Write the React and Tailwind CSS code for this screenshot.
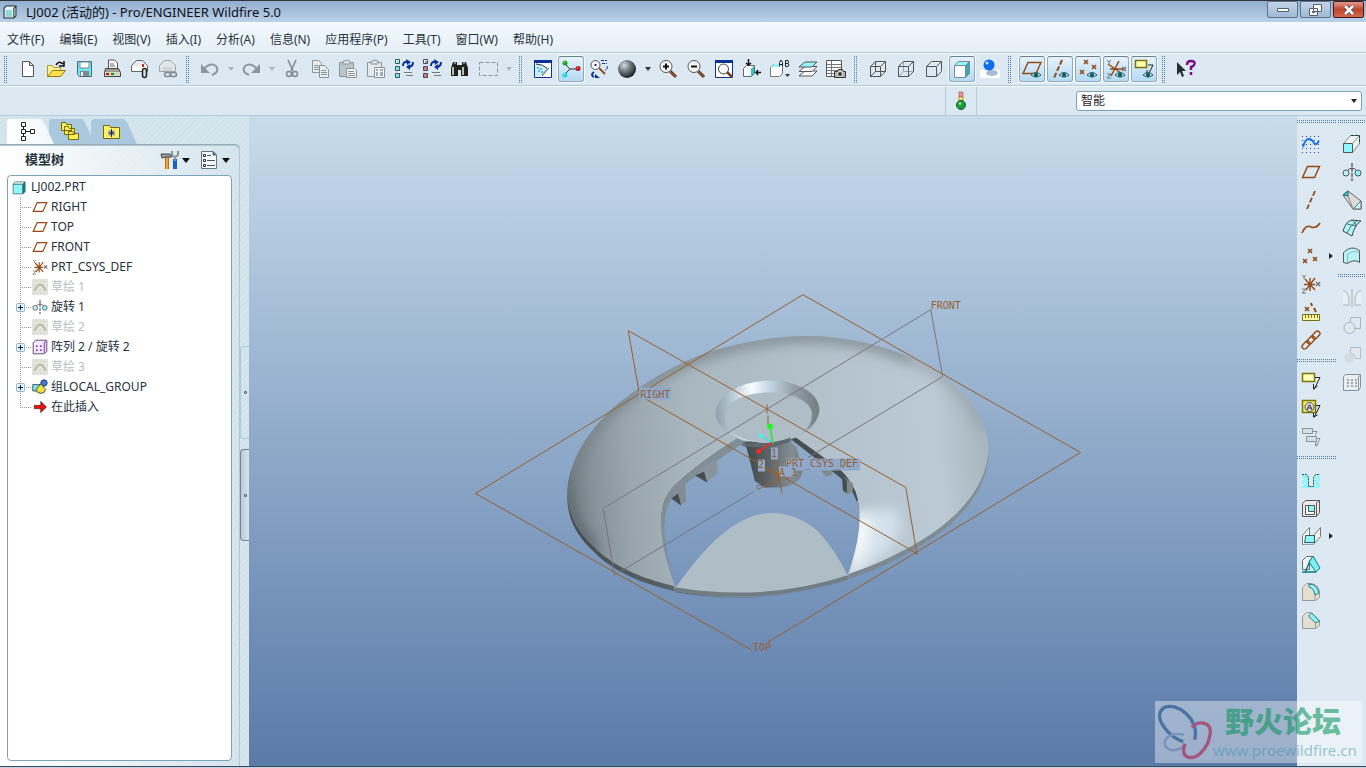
import { clsx } from 'clsx';

const BROWN = '#944a14';
const CYAN = '#8ff6fb';

const MENUS = ['文件(F)', '编辑(E)', '视图(V)', '插入(I)', '分析(A)', '信息(N)', '应用程序(P)', '工具(T)', '窗口(W)', '帮助(H)'];

/* Small shared pieces of the icon drawings */
function Eye() {
  return (
    <g>
      <path d="M9 16q5-5 10 0q-5 4-10 0z" fill="#e8f0f0" stroke="#445" />
      <circle cx="14" cy="16" r="2.4" fill="#00857f" />
      <circle cx="14" cy="16" r="1" fill="#023" />
    </g>
  );
}

function Cross({ x, y, c = BROWN }) {
  return <path d={`M${x - 2} ${y - 2}l4 4m0-4l-4 4`} stroke={c} strokeWidth="1.6" />;
}

function Lens({ children }) {
  return (
    <g>
      <path d="M12 12l6 6" stroke="#5b2c14" strokeWidth="3" />
      <path d="M12 12l6 6" stroke="#b5764b" />
      <circle cx="8" cy="7.500" r="6" fill="#f5f9fb" stroke="#555" />
      {children}
    </g>
  );
}

function Regen({ c }) {
  return (
    <g fill="none">
      <path d="M1.500 .5h4v4h-4zM1.500 7.500h4v4h-4zM1.500 14.500h4v4h-4z" fill={c} stroke="#356" />
      <path d="M2.500 4v-2.500h2.500" stroke="#fff" />
      <path d="M9 7q0-5 5-4M19 3q0 5-5 5" stroke="#0b2f9a" strokeWidth="2" />
      <path d="M12 0l5 3-4 3zM16 5l-4 3 4 3z" fill="#0b2f9a" />
      <path d="M10 13.500h8M12 16.500h7" stroke="#777" />
    </g>
  );
}

function Chain({ c = BROWN }) {
  return (
    <g fill="none" stroke={c} strokeWidth="1.400">
      <rect x="10.500" y="2.500" width="9" height="5" rx="2.500" transform="rotate(-45 15 5)" />
      <rect x="5.500" y="7.500" width="9" height="5" rx="2.500" transform="rotate(-45 10 10)" />
      <rect x=".5" y="12.500" width="9" height="5" rx="2.500" transform="rotate(-45 5 15)" />
    </g>
  );
}

const ICONS = {
  new: <path d="M4.500 2.500h7l4 4v11h-11zM11.500 2.500v4h4" fill="#fff" stroke="#555" />,
  open: (
    <g>
      <path d="M1.500 17.500v-11h5l1 2h7v9z" fill="#ffef96" stroke="#b39b23" />
      <path d="M1.500 17.500l5-6h13l-5 6z" fill="#ffe24a" stroke="#8c7a1c" />
      <path d="M10 6q3-5 7-1M18 2v5h-5" fill="none" stroke="#111" strokeWidth="1.500" />
    </g>
  ),
  save: (
    <g>
      <path d="M3.500 2.500h14v15h-12l-2-2z" fill="#70e9f0" stroke="#4a6a77" />
      <path d="M6 3h9v6h-9z" fill="#fff" stroke="#789" />
      <path d="M6 12h9v5h-9z" fill="#7b8b91" />
      <path d="M7 13h2v4h-2z" fill="#eee" />
    </g>
  ),
  print: (
    <g>
      <path d="M6.500 10v-9h6l3 3v6z" fill="#fff" stroke="#555" />
      <path d="M8 5h4M8 7h5" stroke="#666" />
      <path d="M3.500 9.500h13l2 4v4h-16v-4z" fill="#9c9c90" stroke="#444" />
      <path d="M3 13h15v4h-15z" fill="#d6d6c6" />
      <path d="M4 14h3v2h-3z" fill="#c11" />
      <path d="M9 14h3v2h-3z" fill="#090" />
    </g>
  ),
  mail: (
    <g>
      <path d="M1.500 12.500v-6l5-5h6l5 5v6z" fill="#e9ecee" stroke="#666" />
      <path d="M3 7h12v5h-12z" fill="#fff" />
      <path d="M12 5h2v3h-2z" fill="#d22" />
      <rect x="12.500" y="9.500" width="4" height="9" rx="2" fill="#ddd" stroke="#222" strokeWidth="1.500" />
    </g>
  ),
  mailLink: (
    <g>
      <path d="M1.500 12.500v-6l5-5h6l5 5v6z" fill="#e0e6ea" stroke="#9aa5ab" />
      <path d="M5 8h9v4h-9z" fill="#cfd7dc" />
      <rect x="6.500" y="13.500" width="6" height="4" rx="2" fill="none" stroke="#7e878c" strokeWidth="1.500" />
      <rect x="12.500" y="13.500" width="6" height="4" rx="2" fill="none" stroke="#7e878c" strokeWidth="1.500" />
    </g>
  ),
  undo: (
    <g>
      <path d="M4 10q6-7 12-3q4 6-4 9" fill="none" stroke="#8c979d" strokeWidth="2" />
      <path d="M1 5v9h9z" fill="#8c979d" />
    </g>
  ),
  redo: (
    <g>
      <path d="M16 10q-6-7-12-3q-4 6 4 9" fill="none" stroke="#8c979d" strokeWidth="2" />
      <path d="M19 5v9h-9z" fill="#8c979d" />
    </g>
  ),
  cut: (
    <g fill="none" stroke="#7f8a90" strokeWidth="1.500">
      <path d="M6 1l5 11M14 1l-5 11" />
      <circle cx="7" cy="15" r="2.500" />
      <circle cx="13" cy="15" r="2.500" />
    </g>
  ),
  copy: (
    <g fill="#e8eef2" stroke="#8b959b">
      <path d="M2.500 1.500h6l3 3v9h-9z" />
      <path d="M4 6.500h5M4 8.500h5M4 10.500h5" />
      <path d="M9.500 6.500h5l4 4v8h-9z" />
      <path d="M11 11.500h5M11 13.500h6M11 15.500h6" />
    </g>
  ),
  paste: (
    <g stroke="#8b959b">
      <path d="M1.500 3.500h14v14h-14z" fill="#bcc5ca" />
      <path d="M5 5v-3h2l2-1 2 1h1v3z" fill="#dfe6ea" />
      <path d="M8.500 9.500h8l2 2v7h-10z" fill="#f0f4f6" />
      <path d="M10 12.500h6M10 14.500h7M10 16.500h7" />
    </g>
  ),
  pasteSpecial: (
    <g stroke="#8b959b">
      <path d="M1.500 3.500h14v14h-14z" fill="#e4eaee" />
      <path d="M5 5v-3h2l2-1 2 1h1v3z" fill="#dfe6ea" />
      <path d="M8.500 8.500h10v10h-10z" fill="#f0f4f6" />
      <path d="M10 11h2M14 11h3M10 14h2M14 14h3M10 16h2M14 16h3" strokeWidth="1.500" />
    </g>
  ),
  regen: <Regen c="#7fe8e4" />,
  regenRed: <Regen c="#f07070" />,
  find: (
    <g>
      <path d="M3 3h4v3h5v-3h4l2 6v8h-7v-6h-3v6h-7v-8z" fill="#222" />
      <path d="M3 8v8M13 8v8" stroke="#bdbda8" strokeWidth="2" />
      <path d="M4 4h2M13 4h2" stroke="#eee" />
    </g>
  ),
  select: <path d="M1.500 3.500h18v13h-18z" fill="none" stroke="#8b959b" strokeDasharray="4 2" />,
  repaint: (
    <g>
      <path d="M1.500 1.500h17v17h-17z" fill="#fff" stroke="#0a3296" />
      <path d="M1 1h18v3h-18z" fill="#0a3296" />
      <path d="M2 6q7-1 12 3l-6 8h-6z" fill="#c5f1fa" />
      <path d="M4 9h2M7 10h2M5 12h2M8 13h2" stroke="#27b" />
      <path d="M16 9l-7 8M3 5q7 0 12 5" fill="none" stroke="#333" />
      <path d="M15 9l-6 7" stroke="#9ab0bd" strokeWidth="1.500" />
    </g>
  ),
  spin: (
    <g>
      <path d="M3 4l6 6l-6 6M9 10h7" fill="none" stroke="#333" />
      <circle cx="4" cy="4" r="2.500" fill="#19a319" />
      <circle cx="17" cy="9.500" r="2.500" fill="#c51111" />
      <circle cx="4" cy="16" r="2.500" fill="#23d5e2" />
      <path d="M3 3h1M16 9h1M3 15h1" stroke="#fff" />
    </g>
  ),
  orient: (
    <g>
      <path d="M10 9l6 6" stroke="#8a4d2a" strokeWidth="2" />
      <circle cx="6.500" cy="6" r="4.500" fill="#f3f7fa" stroke="#555" />
      <circle cx="6.500" cy="6" r="1" />
      <path d="M12 1.500h6M13 4.500h5M18 7q1 4-2 4" fill="none" stroke="#0a2f9a" strokeDasharray="3 1" />
      <path d="M5 13q-4 3 0 5" fill="none" stroke="#0a2f9a" strokeWidth="2" />
      <path d="M6 19v-4l5 4z" fill="#0a2f9a" />
    </g>
  ),
  sphere: <circle cx="10" cy="10" r="9" fill="url(#sphereFill)" />,
  zoomIn: <Lens><path d="M5 7.500h6M8 4.500v6" stroke="#111" strokeWidth="2" /></Lens>,
  zoomOut: <Lens><path d="M5 7.500h6" stroke="#111" strokeWidth="2" /></Lens>,
  refit: (
    <g>
      <path d="M1.500 1.500h17v17h-17z" fill="#fff" stroke="#0a3296" />
      <path d="M1 1h18v3h-18z" fill="#0a3296" />
      <path d="M13 13l5 5" stroke="#7a3c1d" strokeWidth="2.500" />
      <circle cx="9.500" cy="10" r="5" fill="#f4f8fa" stroke="#444" />
    </g>
  ),
  reorient: (
    <g>
      <path d="M1.500 9.500l3-3h8v8l-3 3h-8z" fill="#fff" stroke="#666" />
      <path d="M9 10l3-3v8l-3 3z" fill="#27c7c7" />
      <path d="M6.500 0v6M4 4l2.500 2 2.500-2M19 13.500h-5M16 11l-2 2.500 2 2.500" fill="none" stroke="#111" strokeWidth="1.500" />
    </g>
  ),
  views: (
    <g>
      <path d="M.5 8.500l3-3h9v9l-3 3h-9z" fill="#fff" stroke="#777" />
      <path d="M1 8l3-3h7l-2 3z" fill={CYAN} />
      <path d="M9.500 7.500v-4l1.500-2.500 1.500 2.500v4M9.500 5.500h3M15.500 7.500v-6h2.500l.5 1.500-.5 1.500h-2.500M18 4.500l1 1.500-1 1.500h-2.500" fill="#dce9f3" stroke="#222" />
      <path d="M15 15h5l-2.500 3z" fill="#333" />
    </g>
  ),
  layers: (
    <g stroke="#555" fill="#fff">
      <path d="M1 17l6-5h12l-5 5z" />
      <path d="M1 12.500l6-5h12l-5 5z" />
      <path d="M1 8l6-5h12l-5 5z" fill={CYAN} />
    </g>
  ),
  viewMgr: (
    <g>
      <path d="M.5 1.500h15v16h-15z" fill="#fff" stroke="#555" />
      <path d="M1 5.500h14M1 8.500h14M1 11.500h14M1 14.500h14M5.500 2v15" stroke="#777" />
      <path d="M8.500 12.500h3l1-2h4l1 2h2v6h-11z" fill="#b3b3a8" stroke="#333" />
      <circle cx="14" cy="15" r="2.500" fill="#333" stroke="#eee" />
    </g>
  ),
  wire: (
    <path d="M2.500 7.500h10v10h-10zM7.500 2.500h10v10h-10zM2.500 7.500l5-5M12.500 7.500l5-5M2.500 17.500l5-5M12.500 17.500l5-5" fill="none" stroke="#555" />
  ),
  hidden: (
    <g fill="none">
      <path d="M7.500 3v9.500h10M2.500 17.500l5-5" stroke="#9aa6ad" />
      <path d="M2.500 7.500h10v10h-10zM2.500 7.500l5-5h10l-5 5M17.500 2.500v10l-5 5" stroke="#555" />
    </g>
  ),
  noHidden: <path d="M2.500 7.500h10v10h-10zM2.500 7.500l5-5h10l-5 5M17.500 2.500v10l-5 5" fill="none" stroke="#555" />,
  shaded: (
    <g stroke="#7b8a92">
      <path d="M2.500 6.500h11v12h-11z" fill="#fff" />
      <path d="M2.500 6.500l4-4h11l-4 4z" fill={CYAN} />
      <path d="M17.500 2.500v12l-4 4v-12z" fill="#3ba9ae" />
    </g>
  ),
  realism: (
    <g>
      <path d="M0 11h20v8h-20z" fill="#fff" />
      <ellipse cx="12" cy="14" rx="6" ry="3" fill="#a8bdd4" />
      <circle cx="9" cy="6" r="5.500" fill="#0f6bf0" />
      <circle cx="7" cy="4" r="1.500" fill="#cfe4ff" />
    </g>
  ),
  planeEye: <g><path d="M6 3.500h13l-5 11h-13z" fill="none" stroke={BROWN} strokeWidth="1.500" /><Eye /></g>,
  axisEye: <g><path d="M12 1l-8 18" stroke={BROWN} strokeWidth="2" strokeDasharray="5 2" /><Eye /></g>,
  pointEye: <g><Cross x={8} y={3} /><Cross x={16} y={8} /><Cross x={4} y={13} /><Eye /></g>,
  csysEye: (
    <g>
      <path d="M2 5l13 9M13 2l-8 15M4 10h13" stroke={BROWN} strokeWidth="1.500" />
      <path d="M1 1l2 2 2-2M3 3v2M1 15h4l-4 4h4" fill="none" stroke="#777" />
      <Cross x={18} y={10} c="#777" />
      <Eye />
    </g>
  ),
  noteEye: (
    <g>
      <path d="M1.500 1.500h11v7h-11z" fill="#ffffb0" stroke="#77730d" strokeWidth="1.500" />
      <path d="M14 6h5l-4 8M13 11v4h3" fill="none" stroke="#222" />
      <Eye />
    </g>
  ),
  help: (
    <g>
      <path d="M1 3v13l3-3 2 5 2-1-2-5h4z" fill="#222c33" />
      <path d="M11 6q0-4 4-4q4 0 3.500 3q-.5 2-3.500 3v3M15 13v3" fill="none" stroke="#7d0a86" strokeWidth="2.500" />
    </g>
  ),
  sketch: (
    <g fill="none">
      <path d="M1 2.500h18M1 6.500h18M1 10.500h18M1 14.500h18M1 18.500h18" stroke="#234a9e" strokeDasharray="1 3" />
      <path d="M2 13q2-8 6-8q3 0 5 4q2 3 5-2" stroke="#1674e4" strokeWidth="2" />
    </g>
  ),
  plane: <path d="M6.500 4.500h12l-5 11h-12z" fill="none" stroke={BROWN} strokeWidth="1.500" />,
  axis: <path d="M14 1l-8 18" stroke={BROWN} strokeWidth="1.800" strokeDasharray="5 2.500" />,
  curve: <path d="M1 15q4-9 9-6q5 2 9-4" fill="none" stroke={BROWN} strokeWidth="1.600" />,
  points: <g><Cross x={9} y={5} /><Cross x={14} y={13} /><Cross x={4} y={15} /></g>,
  csys: (
    <g>
      <path d="M3 10.500h11M9 4v13M4 5l10 11M14 4l-9 12" stroke={BROWN} strokeWidth="1.400" />
      <path d="M1 1l2 2 2-2M3 3v2M1 15h4l-4 4h4" fill="none" stroke="#777" />
      <Cross x={17} y={10} c="#777" />
    </g>
  ),
  ruler: (
    <g>
      <Cross x={6} y={7} />
      <path d="M10 1l1 3M13 6l2 4" stroke={BROWN} strokeWidth="2" />
      <path d="M1.500 12.500h17v6h-17z" fill="#fff7a0" stroke="#77701a" />
      <path d="M4.500 13v3M7.500 13v3M10.500 13v3M13.500 13v3M16.500 13v3" stroke="#77701a" />
    </g>
  ),
  chain: <Chain />,
  note: (
    <g>
      <path d="M1.500 2.500h12v8h-12z" fill="#ffffb8" stroke="#77730d" strokeWidth="1.500" />
      <path d="M14 6.500h5l-6 12M12.500 13v5l4-3" fill="none" stroke="#222" />
    </g>
  ),
  noteA: (
    <g>
      <path d="M1.500 1.500h13v12h-13z" fill="#f5ef66" stroke="#77730d" strokeWidth="1.500" />
      <circle cx="8.500" cy="8" r="4.500" fill="#ddd" stroke="#555" />
      <path d="M6 11l2-5h1l2 5M7 9h3" fill="none" stroke="#333" />
      <path d="M15 6.500h4l-6 12M12.500 14v4l4-2" fill="none" stroke="#222" />
    </g>
  ),
  notes: (
    <g fill="#d5dfe6" stroke="#88949b">
      <path d="M1.500 1.500h10v5h-10zM5.500 9.500h10v5h-10z" />
      <path d="M12 4.500h4l-2 4M16 11.500h3l-4 8M14.500 15v4l3-2" fill="none" />
    </g>
  ),
  hole: (
    <g>
      <path d="M1 4h5l2 3v10h5v-10l2-3h4v14h-18z" fill={CYAN} />
      <path d="M1 16l5-5M1 10l4-4M14 10l5-5M14 16l5-5" stroke="#fff" />
      <path d="M1 4.500h4.500l2 3v9h5v-9l2-3h4.500" fill="none" stroke="#344" strokeDasharray="2 1" />
    </g>
  ),
  shell: (
    <g stroke="#555" fill="#e8ebe8">
      <path d="M1.500 5.500l3-3h14v12l-3 4h-14z" />
      <path d="M4.500 7.500h9v9h-9z" fill="#fff" />
      <path d="M7.500 7.500h6v6h-6z" fill={CYAN} />
      <path d="M15.500 18v-13l3-3" fill="none" />
    </g>
  ),
  rib: (
    <g>
      <path d="M1.500 18.500v-9l7-8v9" fill="#fff" stroke="#778" />
      <path d="M13.500 17.500v-9l6-7v9z" fill="#f4f1e4" stroke="#778" />
      <path d="M4.500 9.500h9v7h-10l1-5z" fill={CYAN} stroke="#266" />
      <path d="M1.500 18.500h11" stroke="#556" strokeDasharray="1 1" />
    </g>
  ),
  draft: (
    <g>
      <path d="M1.500 6.500l4-4h7l-4 4v9h-7z" fill="#f0f5ef" stroke="#667" />
      <path d="M12 2l7 12-4 4-7-10z" fill="#7eeef0" stroke="#087f86" />
      <path d="M8.500 8l-4 9.500M1 18h14" stroke="#087f86" strokeWidth="1.500" />
    </g>
  ),
  round: (
    <g>
      <path d="M1.500 5.500l4-4h5q8 2 8 10v4l-4 3h-13z" fill="#e3dfd0" stroke="#999" />
      <path d="M8 2q8 0 10 9l-4 2q-1-7-6-8z" fill={CYAN} stroke="#377" />
      <path d="M14 13v5" stroke="#999" />
    </g>
  ),
  chamfer: (
    <g>
      <path d="M1.500 6.500l4-4h5l8 8v5l-4 3h-13z" fill="#e3dfd0" stroke="#999" />
      <path d="M10.500 3l8 8-4 2-7-7z" fill={CYAN} stroke="#377" />
      <path d="M14.500 13v5" stroke="#999" />
    </g>
  ),
  extrude: (
    <g>
      <path d="M1.500 9.500l7-8h9v8l-7 9" fill="#eef4f6" stroke="#888" />
      <path d="M1.500 9.500h9v9h-9z" fill={CYAN} stroke="#555" />
      <path d="M10.500 9.500l7-8" stroke="#888" />
      <path d="M9 1.500h8.500v8" fill="none" stroke="#143" strokeDasharray="3 1" />
    </g>
  ),
  revolve: (
    <g>
      <path d="M4 10q6-8 12 0" fill="none" stroke="#556" />
      <circle cx="4" cy="11" r="3" fill="#bdf3f5" stroke="#555" />
      <circle cx="16" cy="11" r="3" fill={CYAN} stroke="#555" />
      <path d="M10 1v18" stroke="#222" strokeDasharray="4 1" />
    </g>
  ),
  sweep: (
    <g>
      <path d="M1 5l5-4 13 10v8h-8z" fill="#d9dcd9" stroke="#666" />
      <path d="M1 5l5-4v5z" fill="#32d3d8" stroke="#266" />
      <path d="M11 19l8-8v8z" fill="#bff6f8" stroke="#666" />
      <path d="M6 6l5 13" stroke="#888" />
    </g>
  ),
  boundary: (
    <g>
      <path d="M1 13q3-10 9-11l9 1q-6 3-9 15z" fill="#b3f6f8" stroke="#444" />
      <path d="M5 6l9 2M10 2q4 2 4 7M5 15q3-8 10-12" fill="none" stroke="#477" />
    </g>
  ),
  surface: (
    <g>
      <path d="M1.500 6.500q8-8 16-2v12q-5-4-12 1l-4-1z" fill="#b9f5f7" stroke="#555" />
      <path d="M5.500 17v-9q6-4 12-2" fill="none" stroke="#8bb" />
    </g>
  ),
  mirror: <path d="M1 3h2q5 4 4 14h-6M19 3h-2q-5 4-4 14h6M10 1v18" fill="#e8eef2" stroke="#a9b5bc" />,
  merge: (
    <g fill="#dfe8ee" stroke="#a9b5bc">
      <path d="M8.500 1.500h10v11h-10z" />
      <circle cx="7.500" cy="12" r="5.500" />
    </g>
  ),
  trim: <g fill="#e2e8ec" stroke="#b3bdc3"><path d="M8.500 3.500h10v11h-5q-1-5-5-5z" /><circle cx="7" cy="14" r="5" stroke="none" fill="#d5dce1" /></g>,
  pattern: (
    <g>
      <path d="M1.500 4.500l2-2h15v13l-2 3h-15z" fill="#e8edf1" stroke="#88949b" />
      <path d="M5 8h10M5 11h10M5 14h10" stroke="#88949b" strokeWidth="1.500" strokeDasharray="2 2" />
      <path d="M16.500 18v-13l2-2" fill="none" stroke="#88949b" />
    </g>
  ),
  light: (
    <g>
      <path d="M8 1h4v5h-4z" fill="#f28d8d" stroke="#865" strokeWidth=".6" />
      <path d="M8 6h4v4h-4z" fill="#ffef3c" stroke="#865" strokeWidth=".6" />
      <circle cx="10" cy="14" r="4.500" fill="#1e9f35" stroke="#154" />
      <circle cx="9" cy="12.500" r="1.300" fill="#a9efb0" />
    </g>
  ),
  modelTree: (
    <g fill="#fff" stroke="#222">
      <path d="M4.500 1.500h4v4h-4zM4.500 8.500h4v4h-4zM4.500 15.500h4v4h-4zM13.500 8.500h4v4h-4z" />
      <path d="M6.500 6v2M6.500 13v2M9 10.500h4" />
    </g>
  ),
  folders: (
    <g fill="#ffef4d" stroke="#75690d">
      <path d="M1.500 9.500v-8h4l1 2h5v6zM4.500 13.500v-8h4l1 2h5v6zM8.500 18.500v-8h4l1 2h5v6z" />
    </g>
  ),
  favorites: (
    <g>
      <path d="M2.500 17.500v-13h6l1 2h9v11z" fill="#fff166" stroke="#75690d" />
      <path d="M10.500 8v8M7 12h7M8 9.500l5 5M13 9.500l-5 5" stroke="#0b2288" />
    </g>
  ),
  tools: (
    <g>
      <path d="M7 6v13" stroke="#c96c10" strokeWidth="4" />
      <path d="M7 6v13" stroke="#ffe27b" />
      <path d="M1 4h9l2 3h-6l-4 1z" fill="#99a2a5" stroke="#444" />
      <path d="M15 9v10" stroke="#1761c9" strokeWidth="4" />
      <path d="M12 1v4l3 2 3-2v-4M15 6v5" fill="none" stroke="#8a9497" strokeWidth="2" />
    </g>
  ),
  settings: (
    <g>
      <path d="M1.500 1.500h12l3 3v14h-15z" fill="#f7fbfd" stroke="#678" />
      <path d="M7 5.500h4M7 10.500h8M7 15.500h8" stroke="#456" />
      <path d="M3.500 4.500h2v2h-2zM3.500 9.500h2v2h-2zM3.500 14.500h2v2h-2z" fill="#fff" stroke="#234" />
      <path d="M13 2v3h3" fill="#1b78b5" stroke="#456" />
    </g>
  ),
  part: (
    <g stroke="#386a72">
      <path d="M1.500 5.500h13v13h-13z" fill={CYAN} />
      <path d="M1.500 5.500l3-3h13l-3 3z" fill="#e6ffff" />
      <path d="M17.500 2.500v13l-3 3v-13z" fill="#0d8288" />
    </g>
  ),
  appCube: (
    <g stroke="#222c30" strokeWidth="1.500">
      <path d="M1.500 4.500l3-3h14v14l-3 3h-14z" fill="#e9f4f4" />
      <path d="M4 7h9v10h-9z" fill="#8edad9" stroke="none" />
      <path d="M15.500 18v-13l3-3" fill="none" />
    </g>
  ),
  dimSketch: (
    <g>
      <path d="M0 0h20v20h-20z" fill="#e4e4df" />
      <path d="M2 3h16M2 8h16M2 13h16M2 18h16" stroke="#c4c4a8" strokeDasharray="1 3" />
      <path d="M3 15q4-9 8-8q4 1 6 8" fill="none" stroke="#b5b59c" strokeWidth="2" />
    </g>
  ),
  treePattern: (
    <g>
      <path d="M1.500 4.500l3-3h14v14l-3 3h-14z" fill="#f4e8ff" stroke="#403048" />
      <path d="M15.500 18v-13l3-3" fill="none" stroke="#a56ad0" strokeWidth="2" />
      <path d="M5 9h2M10 9h2M5 14h2M10 14h2" stroke="#7b1fb0" strokeWidth="2" />
    </g>
  ),
  group: (
    <g stroke="#234">
      <path d="M1 7h12l-3 8h-9z" fill="#7fe6ea" />
      <circle cx="15" cy="5" r="4" fill="#3b7be0" />
      <path d="M11 6l6 7q-1 5-6 5t-6-5z" fill="#f0e03a" />
    </g>
  ),
  insert: <path d="M3 8h8v-5l7 7-7 7v-5h-8z" fill="#f20d0d" stroke="#300" strokeWidth=".8" />,
};

function Icon({ name, className = 'size-5' }) {
  return (
    <svg viewBox="0 0 20 20" className={clsx('shrink-0', className)} aria-hidden="true">
      {ICONS[name]}
    </svg>
  );
}

function ToolButton({ name, label, active, className }) {
  return (
    <button aria-label={label ?? name} className={clsx('grid size-7 shrink-0 place-items-center', className)}>
      <span
        className={clsx(
          'grid size-[26px] place-items-center rounded-[3px]',
          active && 'border border-[#93a8b8] border-t-[#6c7f8d] bg-linear-to-b from-[#e6f2fb] to-[#b4dbf4] shadow-[0_0_0_1px_#f6fbfe]',
        )}
      >
        <Icon name={name} />
      </span>
    </button>
  );
}

function DropArrow({ off }) {
  return (
    <button aria-label="More" className="grid h-7 w-[13px] shrink-0 place-items-center">
      <svg viewBox="0 0 6 4" className="h-1 w-1.5">
        <path d="M0 0h6L3 4z" fill={off ? '#a9b6c0' : '#2b363d'} />
      </svg>
    </button>
  );
}

const dots = 'bg-[conic-gradient(from_270deg_at_1px_1px,#4f7c9d_25%,transparent_0)] bg-[length:2px_2px]';

function Grip() {
  return <span className={clsx('mr-[7px] ml-1 h-[27px] w-[3px] shrink-0', dots)} />;
}

function FlatGrip() {
  return <span className={clsx('my-1 h-[3px] w-full shrink-0', dots)} />;
}

/* "-" stands for a drop-down arrow, "~" for a dimmed one, a leading "*" for a pressed button */
const TOOLBARS = [
  ['new', 'open', 'save', 'print', 'mail', 'mailLink'],
  ['undo', '~', 'redo', '~', 'cut', 'copy', 'paste', 'pasteSpecial', 'regen', 'regenRed', 'find', 'select', '~'],
  ['repaint', '*spin', 'orient', 'sphere', '-', 'zoomIn', 'zoomOut', 'refit', 'reorient', 'views', 'layers', 'viewMgr'],
  ['wire', 'hidden', 'noHidden', '*shaded', 'realism'],
  ['*planeEye', '*axisEye', '*pointEye', '*csysEye', '*noteEye'],
  ['help'],
];

function TitleBar() {
  const frame = 'grid h-[17px] w-[31px] place-items-center rounded-[2px] border';
  return (
    <header className="flex h-[22px] items-center border-t border-[#30343c] bg-linear-to-b from-[#93aecf] to-[#bad1e9] pr-0.5 pl-[3px]">
      <Icon name="appCube" className="size-[14px]" />
      <h1 className="ml-[9px] text-[13px] leading-5 text-[#0c1118]">LJ002 (活动的) - Pro/ENGINEER Wildfire 5.0</h1>
      <div className="ml-auto flex gap-0.5 self-start">
        <button aria-label="Minimize" className={clsx(frame, 'border-[#5c7391] bg-linear-to-b from-[#c3d4e6] to-[#9fb9d5]')}>
          <svg viewBox="0 0 12 6" className="h-1.5 w-3"><path d="M.5 1.500h11v3h-11z" fill="#fff" stroke="#555e70" /></svg>
        </button>
        <button aria-label="Restore" className={clsx(frame, 'border-[#5c7391] bg-linear-to-b from-[#c3d4e6] to-[#9fb9d5]')}>
          <svg viewBox="0 0 13 12" className="h-3 w-[13px]">
            <path d="M4.500 .5h8v7h-8zM.5 4.500h8v7h-8z" fill="#fff" stroke="#555e70" />
            <path d="M3.500 7.500h2v1h-2z" fill="#9fb9d5" stroke="#555e70" />
          </svg>
        </button>
        <button aria-label="Close" className={clsx(frame, 'border-[#4d1318] bg-linear-to-b from-[#dd9b8e] via-[#c0432c] to-[#d16a4c]')}>
          <svg viewBox="0 0 12 10" className="h-2.5 w-3">
            <path d="M2 1l8 8M10 1l-8 8" stroke="#4e4452" strokeWidth="4" />
            <path d="M2 1l8 8M10 1l-8 8" stroke="#fff" strokeWidth="2.500" />
          </svg>
        </button>
      </div>
    </header>
  );
}

function Toolbar() {
  return (
    <div className="flex h-[34px] items-center border-t border-b border-t-[#b4cbdc] border-b-[#b4cbdc] bg-[#dce9f3] shadow-[inset_0_1px_0_#f4f9fc]">
      {TOOLBARS.map((group) => (
        <div key={group[0]} className="flex items-center">
          <Grip />
          {group.map((t, i) =>
            t === '~' || t === '-' ? (
              <DropArrow key={i} off={t === '~'} />
            ) : (
              <ToolButton key={t} name={t.replace('*', '')} active={t.startsWith('*')} />
            ),
          )}
        </div>
      ))}
    </div>
  );
}

function FilterBar() {
  return (
    <div className="flex h-[30px] items-center border-t border-b border-t-[#f4f9fc] border-b-[#b4cbdc] bg-[#dce9f3] pr-1">
      <div className="ml-auto flex h-full items-center border-r border-l border-[#b4cbdc] px-px">
        <ToolButton name="light" label="Regeneration status" />
      </div>
      <div className="relative ml-[99px] flex w-[286px] items-center">
        <label htmlFor="filter" className="sr-only">选择过滤器</label>
        <select
          id="filter"
          className="h-5 w-full appearance-none rounded-[3px] border border-[#7ba3b8] bg-white pr-5 pl-1 text-xs text-[#1c242b]"
        >
          <option>智能</option>
        </select>
        <svg viewBox="0 0 6 4" className="pointer-events-none absolute right-[5px] h-1 w-1.5">
          <path d="M0 0h6L3 4z" fill="#1c242b" />
        </svg>
      </div>
    </div>
  );
}

const TREE = [
  { icon: 'plane', text: 'RIGHT' },
  { icon: 'plane', text: 'TOP' },
  { icon: 'plane', text: 'FRONT' },
  { icon: 'csys', text: 'PRT_CSYS_DEF' },
  { icon: 'dimSketch', text: '草绘 1', dim: true },
  { icon: 'revolve', text: '旋转 1', plus: true },
  { icon: 'dimSketch', text: '草绘 2', dim: true },
  { icon: 'treePattern', text: '阵列 2 / 旋转 2', plus: true },
  { icon: 'dimSketch', text: '草绘 3', dim: true },
  { icon: 'group', text: '组LOCAL_GROUP', plus: true },
  { icon: 'insert', text: '在此插入' },
];

function Branch({ plus, last }) {
  return (
    <svg viewBox="0 0 16 20" className="h-5 w-4 shrink-0">
      <path d={last ? 'M4.500 0v10' : 'M4.500 0v20'} stroke="#8c9599" strokeDasharray="1 1" />
      <path d="M4 10.500h12" stroke="#8c9599" strokeDasharray="1 1" />
      {plus && (
        <g>
          <rect x=".5" y="6.500" width="8" height="8" rx="1" fill="#e3f1fa" stroke="#8db4cb" />
          <path d="M2 10.500h5M4.500 8v5" stroke="#123" />
        </g>
      )}
    </svg>
  );
}

const tabShape = 'flex h-[25px] items-center pb-0.5 [clip-path:polygon(0_2px,2px_0,72%_0,78%_3px,100%_100%,0_100%)]';

function ModelTreePanel() {
  return (
    <aside className="flex w-[249px] shrink-0 bg-[#d3e3ec] bg-[repeating-linear-gradient(135deg,transparent_0_3px,#dae8ef_3px_4px)]">
      <div className="flex w-60 flex-col">
        <div className="flex pt-[3px] pl-[7px]">
          <button aria-label="模型树" className={clsx(tabShape, 'z-10 w-[47px] bg-linear-to-r from-white to-[#f1f7fa] pl-[10px]')}>
            <Icon name="modelTree" />
          </button>
          <button aria-label="文件夹浏览器" className={clsx(tabShape, '-ml-[5px] w-[46px] bg-[#abc9de] pl-[11px]')}>
            <Icon name="folders" />
          </button>
          <button aria-label="收藏夹" className={clsx(tabShape, '-ml-1 w-[46px] bg-[#abc9de] pl-[10px]')}>
            <Icon name="favorites" />
          </button>
        </div>
        <section className="flex grow flex-col rounded-tr-[5px] border-t border-[#97abb6] bg-linear-to-r from-white to-transparent pb-[5px] shadow-[inset_-1px_1px_0_#b3c6d1]">
          <div className="flex h-[30px] items-center pr-2.5 pl-[25px]">
            <h2 className="text-[13px] font-bold text-[#27333c]">模型树</h2>
            <button aria-label="显示" className="ml-auto flex items-center gap-0.5">
              <Icon name="tools" />
              <svg viewBox="0 0 8 5" className="h-[5px] w-2"><path d="M0 0h8L4 5z" fill="#111" /></svg>
            </button>
            <button aria-label="设置" className="ml-2.5 flex items-center gap-0.5">
              <Icon name="settings" />
              <svg viewBox="0 0 8 5" className="h-[5px] w-2"><path d="M0 0h8L4 5z" fill="#111" /></svg>
            </button>
          </div>
          <ul className="mr-2 ml-[7px] grow rounded-[4px] border border-[#7aa5b8] bg-white pt-px text-xs leading-5 text-[#26323c]">
            <li className="flex h-5 items-center gap-1 pl-1">
              <Icon name="part" className="size-[15px]" />
              LJ002.PRT
            </li>
            {TREE.map((n, i) => (
              <li key={n.text} className={clsx('flex h-5 items-center pl-2', n.dim && 'text-[#b9bec1]')}>
                <Branch plus={n.plus} last={i === TREE.length - 1} />
                <Icon name={n.icon} className="mr-[3px] size-4" />
                {n.text}
              </li>
            ))}
          </ul>
        </section>
      </div>
      <div className="flex w-[9px] flex-col gap-2.5 pt-[230px]">
        <button aria-label="Collapse tree" className="grid h-[93px] place-items-center rounded-l-[4px] border border-r-0 border-[#a9cbe0]">
          <span className="size-[3px] rounded-full border border-[#26323c]" />
        </button>
        <button aria-label="Collapse browser" className="grid h-[92px] place-items-center rounded-l-[4px] border border-r-0 border-[#74828d] bg-linear-to-r from-[#b9ccd8] to-[#d5e5ef]">
          <span className="size-[3px] rounded-full border border-[#26323c]" />
        </button>
      </div>
    </aside>
  );
}

const BODY =
  'M567 492C568 458 592 425 618 403C646 380 684 358 716 349C748 340 780 335 811 335C850 336 884 345 914 358C950 375 974 397 985 428C989 440 990 449 988 458C984 484 965 508 942 526C920 543 885 562 848 574Q770 602 675 586C640 578 612 566 592 545C574 528 567 510 567 492Z';
const HOLE =
  'M675 587C670 570 661 548 661 522C661 505 665 496 673 486Q700 461 737 438L746 442H782L793 435L838 467Q856 484 859 505C862 530 855 555 848 575Q765 602 675 587Z';

/* Shaded part with its datum planes */
function Model() {
  return (
    <svg viewBox="249 115 1048 651" className="h-full w-full" aria-label="LJ002">
      <defs>
        <linearGradient id="skin" x1="567" x2="989" y1="480" y2="440" gradientUnits="userSpaceOnUse">
          <stop offset="0" stopColor="#717d83" />
          <stop offset=".06" stopColor="#879399" />
          <stop offset=".15" stopColor="#9aa7ae" />
          <stop offset=".3" stopColor="#a9b7bf" />
          <stop offset=".6" stopColor="#b3c1cb" />
          <stop offset=".88" stopColor="#bbcad5" />
          <stop offset="1" stopColor="#a7b5bd" />
        </linearGradient>
        <linearGradient id="rim" x1="567" x2="989" y1="0" y2="0" gradientUnits="userSpaceOnUse">
          <stop offset="0" stopColor="#434b4e" />
          <stop offset=".25" stopColor="#596367" />
          <stop offset=".5" stopColor="#76818a" />
          <stop offset="1" stopColor="#848f95" />
        </linearGradient>
        <linearGradient id="ring" x1="0" x2="1" y1="0" y2="0">
          <stop offset="0" stopColor="#90a1ad" />
          <stop offset=".15" stopColor="#b4c5d1" />
          <stop offset=".36" stopColor="#fafdff" />
          <stop offset=".52" stopColor="#c6d9e6" />
          <stop offset=".75" stopColor="#96a3aa" />
          <stop offset="1" stopColor="#727d82" />
        </linearGradient>
        <linearGradient id="post" x1="0" x2="1" y1="0" y2="0">
          <stop offset="0" stopColor="#404749" />
          <stop offset=".35" stopColor="#585f62" />
          <stop offset=".8" stopColor="#828d93" />
          <stop offset="1" stopColor="#788388" />
        </linearGradient>
        <clipPath id="skinClip">
          <path d={`${BODY}${HOLE}`} clipRule="evenodd" />
        </clipPath>
        <filter id="soft" x="-50%" y="-50%" width="200%" height="200%">
          <feGaussianBlur stdDeviation="7" />
        </filter>
      </defs>

      {/* lower edge, then the skin above it */}
      <path d={`${BODY}${HOLE}`} fillRule="evenodd" fill="url(#rim)" transform="translate(0 5)" />
      <path d={`${BODY}${HOLE}`} fillRule="evenodd" fill="url(#skin)" />
      <g clipPath="url(#skinClip)">
        <path d="M567 492C568 458 592 425 618 403C646 380 684 358 716 349C748 340 780 335 811 335C850 336 884 345 914 358" fill="none" stroke="#737f85" strokeWidth="10" filter="url(#soft)" />
        <path d="M914 358C950 375 974 397 985 428" fill="none" stroke="#8b979d" strokeWidth="7" filter="url(#soft)" />
        <path d="M561 475q0 45 35 76" fill="none" stroke="#5a666c" strokeWidth="12" filter="url(#soft)" />
        <path d="M857 512l38-5q12 20-5 43l-38 32z" fill="#dceaf4" opacity=".8" filter="url(#soft)" />
        <path d="M856 516l12-2q4 24-8 44l-14 22z" fill="#fff" filter="url(#soft)" />
      </g>

      {/* cut-out walls and clips */}
      <path d="M675 586C670 570 661 548 661 522C661 505 665 496 673 486Q700 461 737 438L744 442Q704 468 679 489Q665 500 664 528Q665 553 675 586" fill="#828e95" />
      <path d="M695 476l10-10 11-8 2 14-11 10-4-6z" fill="#8a959b" />
      <path d="M695 475l9-4 3 11z" fill="#454d50" />
      <path d="M672 496l13-13 1 18-6 4z" fill="#828d93" />
      <path d="M671 498l7-5 3 12z" fill="#454d50" />
      <path d="M790 438l3-3 46 33q15 13 19 31l-1 2q-7-18-22-28z" fill="#474f53" />
      <path d="M820 469l10-1 3 6-7 2zM842 475l11 8v8l-6 3z" fill="#80898e" />
      <path d="M842 475l5 5v13l-4-3z" fill="#454d50" />
      <path d="M675 588C701 552 729 518 765 513Q795 510 819 532Q837 552 848 576Q765 604 675 588Z" fill="#afbdc7" />
      <path d="M675 587Q765 602 848 575v4Q765 606 675 591z" fill="#727d83" />

      {/* centre post and recess */}
      <path d="M745 441h45l6 5 7 22q-1 16-22 19h-17l-8-6h-1z" fill="url(#post)" />
      <ellipse cx="767.500" cy="411" rx="52" ry="31" fill="url(#ring)" transform="rotate(-3 767 411)" />
      <path d="M725 417C725 400 745 392 769 392C794 392 812 402 812 414C812 432 792 443 766 443C743 441 725 432 725 417Z" fill="#afbdc7" />
      <path d="M742 441q24 5 49-4l-2 5q-20 6-43 4z" fill="#5d686e" />

      <g fill="none" stroke="#767582">
        <path d="M931 309L943 376L808 457M754 491L614 575L603 508L931 309" />
      </g>
      <g fill="none" stroke="#985f2b">
        <path d="M752 650L475 493L803 294L1081 452L768 642" />
        <path d="M639 392L628 330L906 487L917 553L645 398M914 553h4" />
        <path d="M767 404v9m1 2v9M773 445l9 48M764 467l17 10-23 12M778 475l14-8M778 470v12" />
      </g>
      <path d="M757 489v-4h4" fill="none" stroke="#767582" />

      <path d="M770 426l3 17" stroke="#2be62b" strokeWidth="1.500" />
      <path d="M760 435l12 7" stroke="#35e8e8" strokeWidth="1.500" />
      <path d="M758 451l14-9" stroke="#ee2b2b" strokeWidth="1.500" />
      <circle cx="770" cy="426" r="3" fill="#26f526" />
      <circle cx="760.500" cy="435" r="2" fill="#43f4f4" />
      <circle cx="758.500" cy="451" r="2.500" fill="#f12b2b" />

      <g fill="#8fa9cc">
        <path d="M639 387h32v12h-32zM786 458h74v12h-74zM771 447h7v12h-7zM758 459h7v12h-7zM779 466h16v10h-16z" />
      </g>
      <g fill="#985f2b" fontSize="10" fontFamily="'DejaVu Sans Mono', monospace">
        <text x="640" y="397">RIGHT</text>
        <text x="931" y="308">FRONT</text>
        <text x="753" y="651">TOP</text>
        <text x="786" y="467">PRT_CSYS_DEF</text>
        <text x="779" y="476">A_1</text>
        <text x="771" y="457">1</text>
        <text x="758" y="468">2</text>
      </g>
    </svg>
  );
}

function SideTools({ names, arrowAfter, className }) {
  return (
    <div className={clsx('flex flex-col', className)}>
      {names.map((n) => (
        <div key={n} className="flex items-center">
          <ToolButton name={n} />
          {n === arrowAfter && (
            <svg viewBox="0 0 4 6" className="ml-1 h-1.5 w-1"><path d="M0 0v6l4-3z" fill="#1c242b" /></svg>
          )}
        </div>
      ))}
    </div>
  );
}

function FeatureBar() {
  return (
    <aside className="flex w-[69px] shrink-0 gap-px overflow-hidden bg-[#dce9f3]">
      <div className="flex w-10 shrink-0 flex-col">
        <FlatGrip />
        <SideTools className="mt-[3px] mb-px" names={['sketch', 'plane', 'axis', 'curve', 'points', 'csys', 'ruler', 'chain']} arrowAfter="points" />
        <FlatGrip />
        <SideTools className="my-px" names={['note', 'noteA', 'notes']} />
        <FlatGrip />
        <SideTools className="mt-[3px]" names={['hole', 'shell', 'rib', 'draft', 'round', 'chamfer']} arrowAfter="rib" />
      </div>
      <div className="flex w-7 shrink-0 flex-col">
        <FlatGrip />
        <SideTools className="mt-[3px]" names={['extrude', 'revolve', 'sweep', 'boundary', 'surface']} />
        <FlatGrip />
        <SideTools className="mt-[3px]" names={['mirror', 'merge', 'trim', 'pattern']} />
      </div>
    </aside>
  );
}

function Watermark() {
  return (
    <div className="pointer-events-none absolute right-1 bottom-[3px] flex h-[62px] w-[207px] items-center bg-white/40">
      <svg viewBox="0 0 60 62" className="h-[62px] w-[58px] shrink-0">
        <g fill="none">
          <path d="M41 39C47 17 21-1 9 6C-3 15 13 35 29 41" stroke="#4a72a3" strokeWidth="3.500" />
          <path d="M30 34C16 30 7 39 11 46Q18 54 32 45" stroke="#7793ba" strokeWidth="2.500" />
          <path d="M38 26C45 19 59 20 57 33C55 48 43 60 34 57Q27 54 31 43" stroke="#a3577f" strokeWidth="3.500" />
        </g>
      </svg>
      <div className="flex flex-col">
        <span className="ml-3 text-[29px] leading-9 font-black text-[#008f55]/55">野火论坛</span>
        <span className="text-[15px] leading-5 text-[#3d93a8]/50">www.proewildfire.cn</span>
      </div>
    </div>
  );
}

export default function App() {
  return (
    <div className="flex min-h-screen flex-col bg-[#dce9f3] font-['Noto_Sans','Noto_Sans_CJK_SC',sans-serif]">
      <svg className="absolute size-0" aria-hidden="true">
        <defs>
          <radialGradient id="sphereFill" cx=".35" cy=".3" r=".75">
            <stop offset="0" stopColor="#d9dde0" />
            <stop offset=".4" stopColor="#7d8388" />
            <stop offset="1" stopColor="#14181b" />
          </radialGradient>
        </defs>
      </svg>
      <TitleBar />
      <nav className="flex h-[30px] items-center gap-[15px] bg-linear-to-b from-[#f3f9fe] to-[#e6eff6] pt-1.5 pl-[7px] text-xs text-[#26323c]">
        {MENUS.map((m) => (
          <button key={m} className="shrink-0">{m}</button>
        ))}
      </nav>
      <Toolbar />
      <FilterBar />
      <main className="relative flex grow">
        <ModelTreePanel />
        <div className="relative min-w-0 grow bg-linear-to-b from-[#c8dceb] to-[#5a7aa8]">
          <div className="absolute inset-0">
            <Model />
          </div>
        </div>
        <FeatureBar />
        <Watermark />
      </main>
      <footer className="flex h-0.5 border-t border-[#3c4a5a] bg-[#c3d3e6]" />
    </div>
  );
}
